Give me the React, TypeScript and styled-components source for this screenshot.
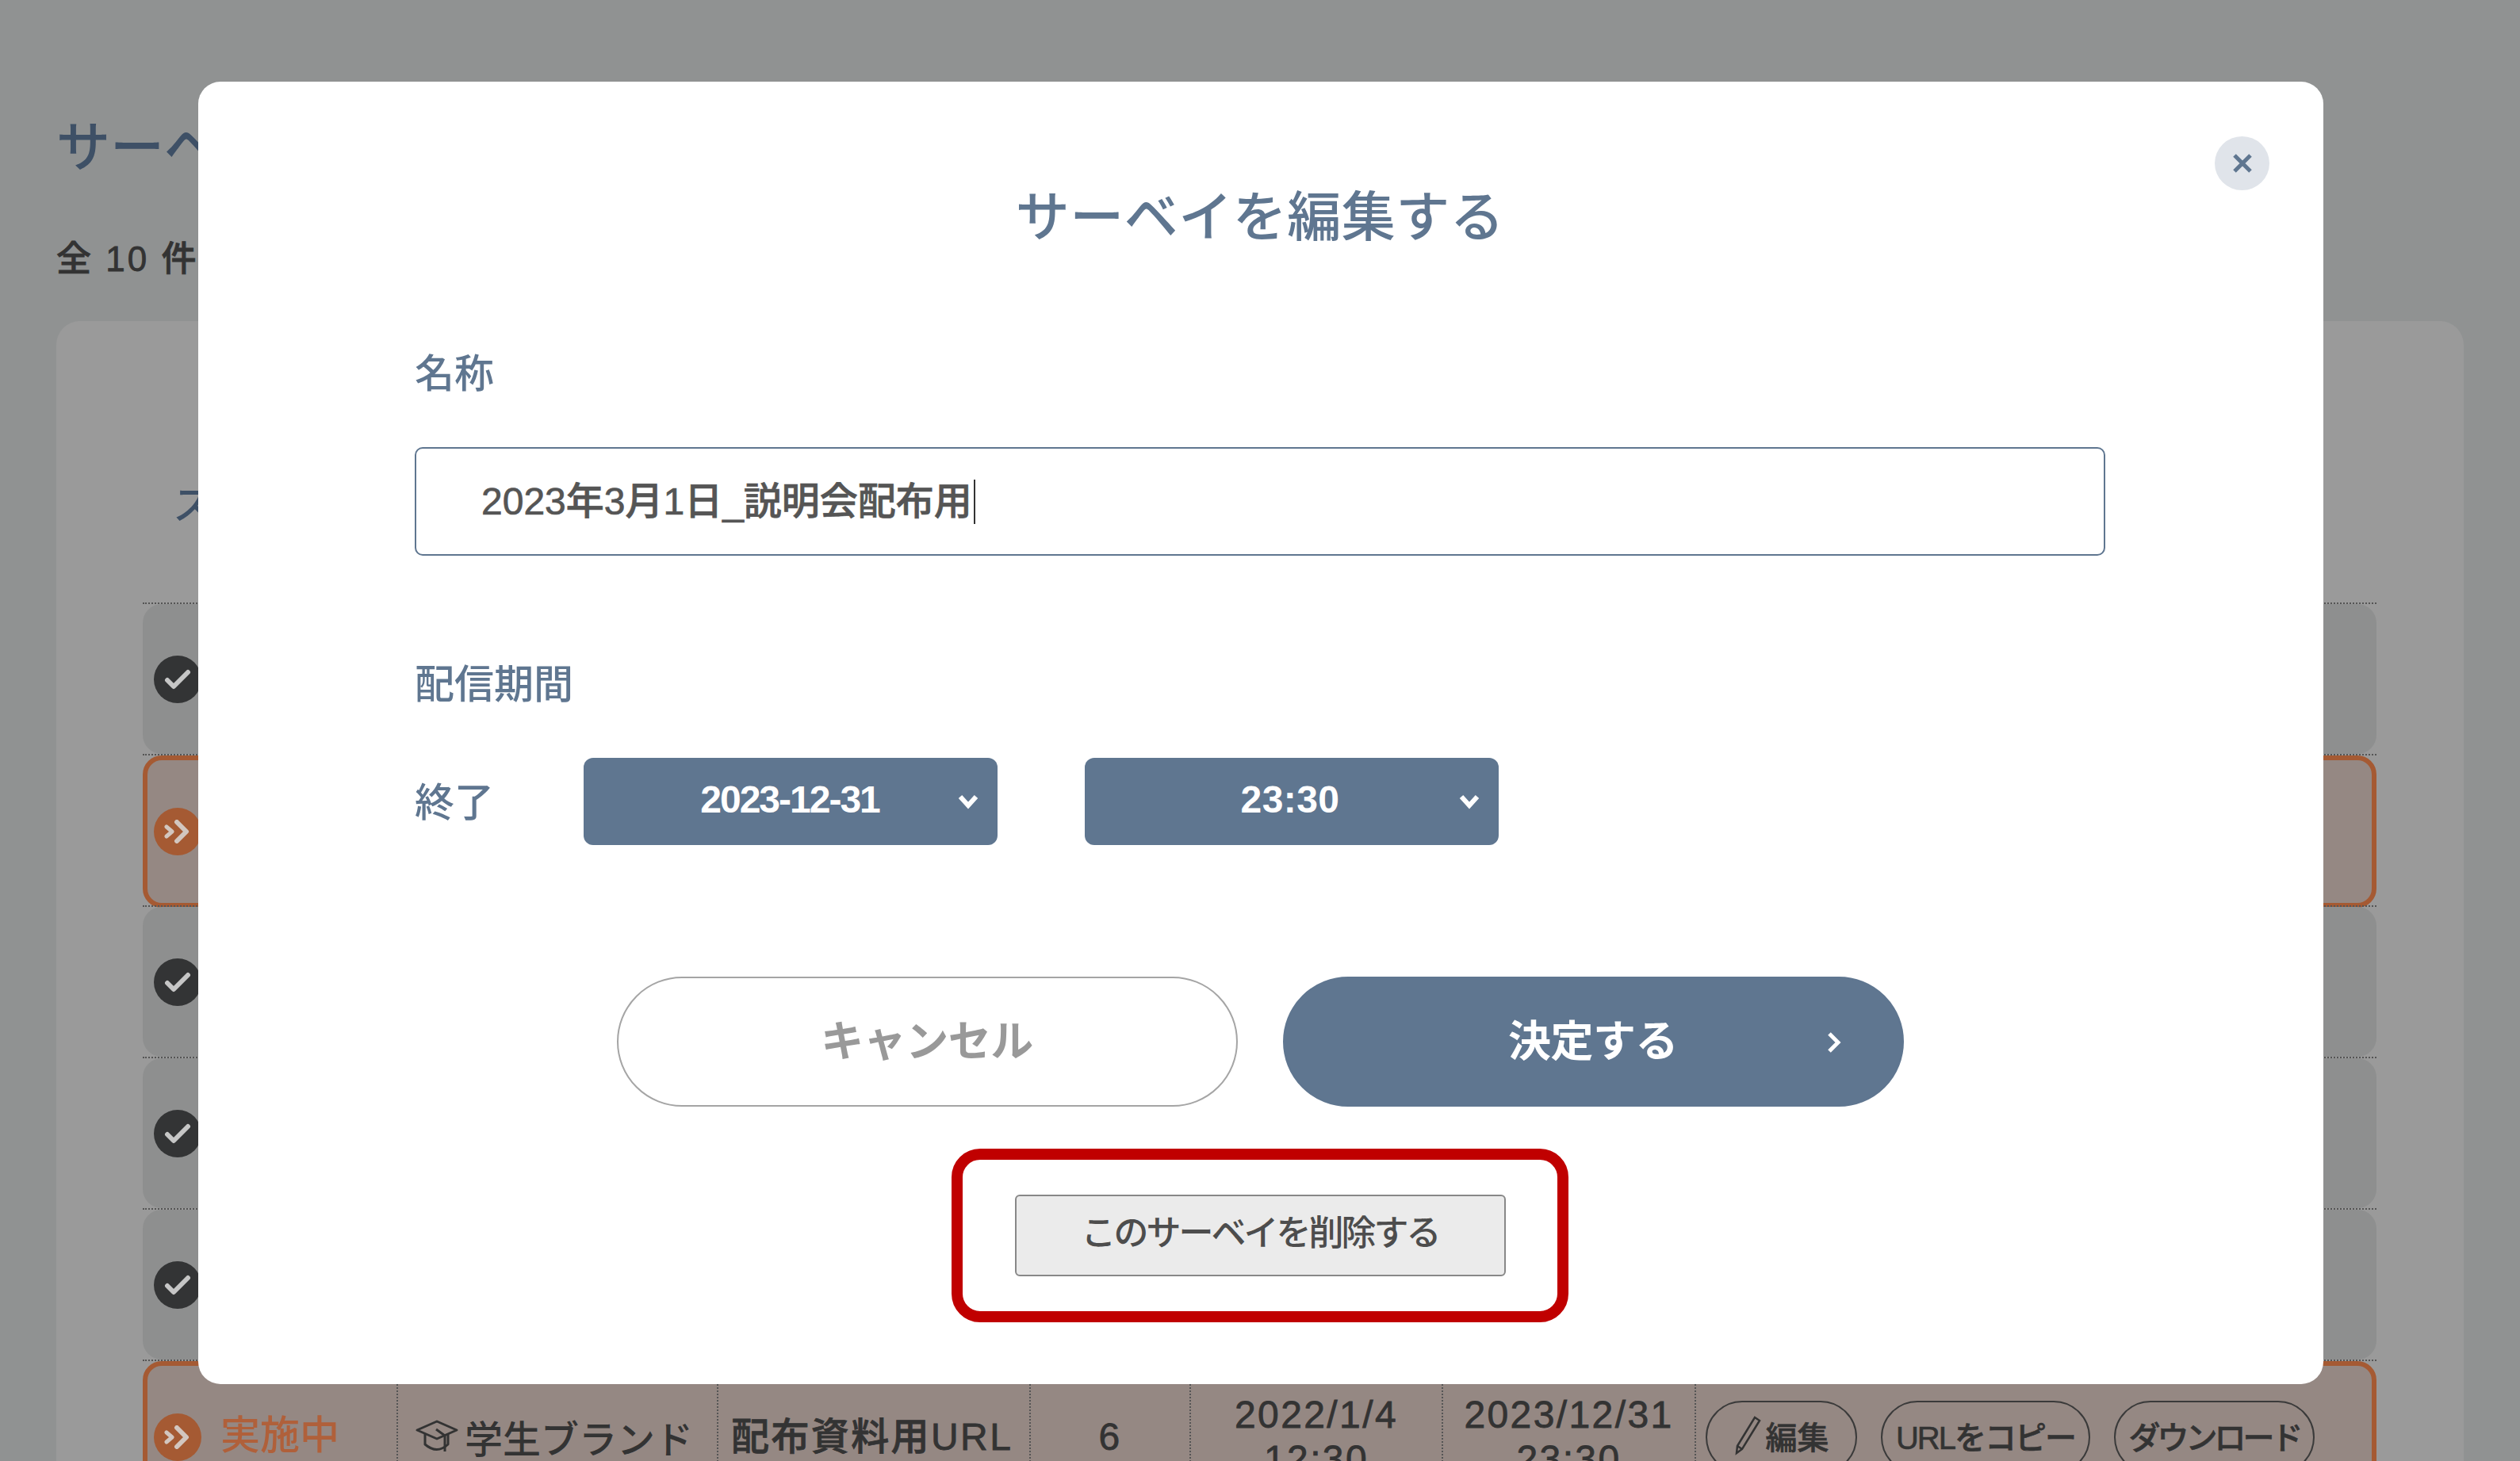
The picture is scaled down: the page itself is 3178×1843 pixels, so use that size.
import React from 'react';
import styled, { createGlobalStyle } from 'styled-components';

const FONT = '"Liberation Sans", "Noto Sans CJK JP", sans-serif';
const NAVY = '#5f7690';

const GlobalStyle = createGlobalStyle`
  html, body { margin: 0; height: 100%; }
  body { font-family: ${FONT}; background: #909292; }
  * { box-sizing: border-box; }
`;

const Page = styled.div`
  height: 100vh;
  overflow: hidden;
  padding: 134px 71px 0;
  background: #909292;
`;

const PageTitle = styled.h1`
  margin: 0;
  font-size: 68px;
  line-height: 104px;
  font-weight: 500;
  color: #3e5066;
`;

const Count = styled.p`
  margin: 59px 0 0;
  font-size: 44px;
  line-height: 60px;
  font-weight: 500;
  letter-spacing: 3px;
  -webkit-text-stroke: 0.8px #333;
  color: #333;
`;

const Panel = styled.section`
  margin-top: 48px;
  padding: 198px 110px 0 109px;
  border-radius: 30px 30px 0 0;
  background: #9a9a9a;
`;

const TableHead = styled.div`
  height: 157px;
  padding-left: 38px;
  font-size: 50px;
  line-height: 70px;
  font-weight: 500;
  color: #3e5066;
`;

const RowWrap = styled.div`
  border-top: 2px dotted #555;
  height: 191px;
`;

const RowCard = styled.div<{ $active?: boolean }>`
  height: ${(p) => (p.$active ? 'calc(100% + 3px)' : '100%')};
  display: grid;
  grid-template-columns: 316px 404px 394px 202px 318px 319px 1fr;
  border: 6px solid ${(p) => (p.$active ? '#a55a33' : 'transparent')};
  border-radius: 24px;
  background: ${(p) => (p.$active ? '#958883' : '#8e8f8f')};
`;

const Cell = styled.div<{ $center?: boolean }>`
  display: flex;
  flex-direction: column;
  justify-content: center;
  align-items: ${(p) => (p.$center ? 'center' : 'flex-start')};
  padding-left: ${(p) => (p.$center ? 0 : 16)}px;
  border-right: 2px dotted #555;
  font-size: 48px;
  line-height: 56px;
  font-weight: 500;
  letter-spacing: 2.4px;
  -webkit-text-stroke: 0.8px #333;
  color: #333;
`;

const StatusCell = styled.div`
  display: flex;
  align-items: center;
  gap: 24px;
  padding-left: 8px;
  border-right: 2px dotted #555;
`;

const StatusDot = styled.span<{ $active?: boolean }>`
  flex: none;
  width: 60px;
  height: 60px;
  display: flex;
  align-items: center;
  justify-content: center;
  border-radius: 50%;
  background: ${(p) => (p.$active ? '#a55a33' : '#333435')};
`;

const StatusText = styled.span`
  padding-bottom: 4px;
  font-size: 50px;
  line-height: 66px;
  font-weight: 500;
  color: #b0603a;
`;

const BrandCell = styled.div`
  display: flex;
  align-items: center;
  gap: 8px;
  padding: 0 0 3px 22px;
  border-right: 2px dotted #555;
  font-size: 48px;
  font-weight: 500;
  color: #333;
`;

const ActionCell = styled.div`
  display: flex;
  align-items: center;
  gap: 30px;
  padding-left: 12px;
`;

const OutlinePill = styled.span<{ $width: number; $spacing: number }>`
  width: ${(p) => p.$width}px;
  height: 92px;
  flex: none;
  display: flex;
  align-items: center;
  justify-content: center;
  gap: 6px;
  padding-bottom: 4px;
  border: 2px solid #3a3a3a;
  border-radius: 46px;
  font-size: 40px;
  font-weight: 500;
  letter-spacing: ${(p) => p.$spacing}px;
  -webkit-text-stroke: 0.6px #333;
  color: #333;
`;

const Overlay = styled.div`
  position: fixed;
  inset: 0;
  display: flex;
  justify-content: center;
  align-items: flex-start;
  padding: 103px 0 0 2px;
`;

const Modal = styled.div`
  position: relative;
  width: 2680px;
  height: 1643px;
  padding: 121px 275px 0 273px;
  border-radius: 28px;
  background: #fff;
`;

const CloseButton = styled.button`
  position: absolute;
  top: 69px;
  right: 68px;
  width: 69px;
  height: 68px;
  padding: 0;
  display: flex;
  align-items: center;
  justify-content: center;
  border: 0;
  border-radius: 50%;
  background: #e0e4ea;
`;

const ModalTitle = styled.h2`
  margin: 0;
  text-align: center;
  font-size: 68px;
  line-height: 100px;
  letter-spacing: 0.5px;
  font-weight: 500;
  color: ${NAVY};
`;

const FieldLabel = styled.div<{ $top: number }>`
  margin-top: ${(p) => p.$top}px;
  font-size: 50px;
  line-height: 70px;
  font-weight: 500;
  color: ${NAVY};
`;

const NameField = styled.div`
  margin-top: 57px;
  height: 137px;
  display: flex;
  align-items: center;
  padding: 0 0 9px 82px;
  border: 2px solid ${NAVY};
  border-radius: 10px;
  font-size: 48px;
  font-weight: 500;
  -webkit-text-stroke: 0.7px #555;
  color: #555;
`;

const Caret = styled.span`
  width: 2px;
  height: 56px;
  margin: 9px 0 0 2px;
  background: #333;
`;

const EndRow = styled.div`
  margin-top: 57px;
  display: flex;
  align-items: center;
`;

const EndLabel = styled.span`
  width: 213px;
  padding-bottom: 6px;
  font-size: 50px;
  font-weight: 500;
  color: ${NAVY};
`;

const SelectBox = styled.div<{ $tight?: boolean }>`
  position: relative;
  width: 522px;
  height: 110px;
  margin-right: 110px;
  display: flex;
  align-items: center;
  justify-content: center;
  padding: 0 ${(p) => (p.$tight ? 2 : 4)}px 6px 0;
  border-radius: 12px;
  background: ${NAVY};
  font-size: 48px;
  font-weight: 700;
  letter-spacing: ${(p) => (p.$tight ? -2 : 0.4)}px;
  color: #fff;
  svg {
    position: absolute;
    right: 24px;
    top: 45px;
  }
`;

const ButtonRow = styled.div`
  margin-top: 166px;
  display: flex;
  justify-content: center;
  gap: 57px;
`;

const PillButton = styled.button<{ $primary?: boolean }>`
  position: relative;
  width: 783px;
  height: 164px;
  padding-bottom: 10px;
  border: 2px solid ${(p) => (p.$primary ? NAVY : '#a5a5a5')};
  border-radius: 82px;
  background: ${(p) => (p.$primary ? NAVY : '#fff')};
  font-family: ${FONT};
  font-size: 54px;
  font-weight: 700;
  letter-spacing: -0.5px;
  color: ${(p) => (p.$primary ? '#fff' : '#999')};
  svg {
    position: absolute;
    right: 76px;
    top: 66px;
  }
`;

const HighlightFrame = styled.div`
  width: 778px;
  height: 219px;
  margin: 53px auto 0;
  display: flex;
  align-items: center;
  justify-content: center;
  border: 14px solid #c00000;
  border-radius: 36px;
`;

const DeleteButton = styled.button`
  width: 619px;
  height: 103px;
  padding-bottom: 14px;
  border: 2px solid #888;
  border-radius: 6px;
  background: #ebebeb;
  font-family: ${FONT};
  font-size: 44px;
  font-weight: 500;
  letter-spacing: -3px;
  color: #4d4d4d;
`;

const CheckIcon = () => (
  <svg width="34" height="28" viewBox="0 0 34 28">
    <polyline
      points="4,15 12,23 30,5"
      fill="none"
      stroke="#c6c6c6"
      strokeWidth="6"
      strokeLinecap="round"
      strokeLinejoin="round"
    />
  </svg>
);

const DoubleChevron = () => (
  <svg width="34" height="30" viewBox="0 0 34 30" fill="none" stroke="#d2c6bf" strokeLinecap="round" strokeLinejoin="round">
    <polyline points="3,9 10,15 3,21" strokeWidth="5" />
    <polyline points="16,3 28,15 16,27" strokeWidth="6" />
  </svg>
);

const CapIcon = () => (
  <svg width="54" height="42" viewBox="0 0 54 42" fill="none" stroke="#333" strokeWidth="3" strokeLinejoin="round">
    <polygon points="27,2 52,13 27,24 2,13" />
    <path d="M12 18 V31 Q27 44 41 31 V18" />
    <path d="M26 12 L37 20 V40" />
  </svg>
);

const PencilIcon = () => (
  <svg width="34" height="50" viewBox="0 0 34 50" fill="none" stroke="#333" strokeWidth="2.5">
    <path d="M26 2 L32 6 L10 42 L3 47 L4 38 Z" />
    <path d="M4 38 L10 42" />
  </svg>
);

const SelectChevron = () => (
  <svg width="26" height="20" viewBox="0 0 26 20">
    <polyline points="3,4 13,15 23,4" fill="none" stroke="#fff" strokeWidth="6" />
  </svg>
);

const rows = [false, true, false, false, false];

const App: React.FC = () => (
  <>
    <GlobalStyle />
    <Page>
      <PageTitle>サーベイ一覧</PageTitle>
      <Count>全 10 件</Count>
      <Panel>
        <TableHead>ステータス</TableHead>
        {rows.map((active, i) => (
          <RowWrap key={i}>
            <RowCard $active={active}>
              <StatusCell>
                <StatusDot $active={active}>{active ? <DoubleChevron /> : <CheckIcon />}</StatusDot>
              </StatusCell>
            </RowCard>
          </RowWrap>
        ))}
        <RowWrap>
          <RowCard $active>
            <StatusCell>
              <StatusDot $active>
                <DoubleChevron />
              </StatusDot>
              <StatusText>実施中</StatusText>
            </StatusCell>
            <BrandCell>
              <CapIcon />
              学生ブランド
            </BrandCell>
            <Cell>配布資料用URL</Cell>
            <Cell $center>6</Cell>
            <Cell $center>
              <span>2022/1/4</span>
              <span>12:30</span>
            </Cell>
            <Cell $center>
              <span>2023/12/31</span>
              <span>23:30</span>
            </Cell>
            <ActionCell>
              <OutlinePill $width={191} $spacing={0}>
                <PencilIcon />
                編集
              </OutlinePill>
              <OutlinePill $width={264} $spacing={-2}>URLをコピー</OutlinePill>
              <OutlinePill $width={253} $spacing={-4}>ダウンロード</OutlinePill>
            </ActionCell>
          </RowCard>
        </RowWrap>
      </Panel>
    </Page>
    <Overlay>
      <Modal>
        <CloseButton aria-label="閉じる">
          <svg width="26" height="26" viewBox="0 0 26 26">
            <path d="M3 3 L23 23 M23 3 L3 23" stroke={NAVY} strokeWidth="5" />
          </svg>
        </CloseButton>
        <ModalTitle>サーベイを編集する</ModalTitle>
        <FieldLabel $top={113}>名称</FieldLabel>
        <NameField>
          2023年3月1日_説明会配布用
          <Caret />
        </NameField>
        <FieldLabel $top={128}>配信期間</FieldLabel>
        <EndRow>
          <EndLabel>終了</EndLabel>
          <SelectBox $tight>
            2023-12-31
            <SelectChevron />
          </SelectBox>
          <SelectBox>
            23:30
            <SelectChevron />
          </SelectBox>
        </EndRow>
        <ButtonRow>
          <PillButton>キャンセル</PillButton>
          <PillButton $primary>
            決定する
            <svg width="20" height="30" viewBox="0 0 20 30">
              <polyline points="4,4 15,15 4,26" fill="none" stroke="#fff" strokeWidth="5" />
            </svg>
          </PillButton>
        </ButtonRow>
        <HighlightFrame>
          <DeleteButton>このサーベイを削除する</DeleteButton>
        </HighlightFrame>
      </Modal>
    </Overlay>
  </>
);

export default App;
